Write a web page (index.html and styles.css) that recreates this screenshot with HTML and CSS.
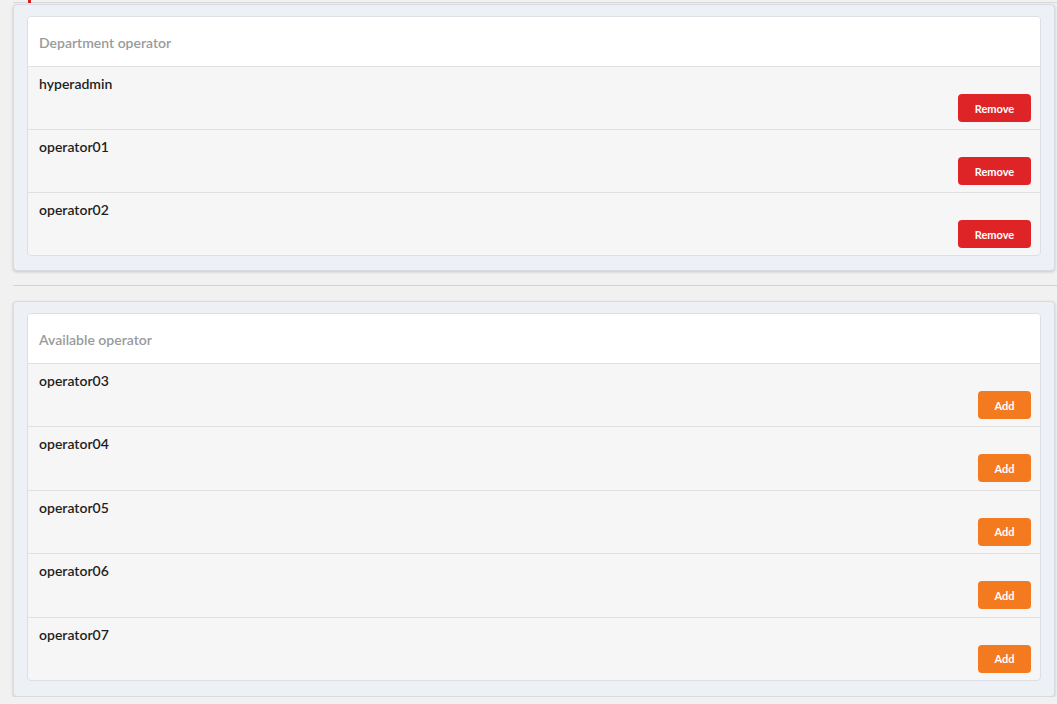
FILE: index.html
```html
<!DOCTYPE html>
<html lang="en">
<head>
    <meta charset="UTF-8">
    <meta name="viewport" content="width=device-width, initial-scale=1.0">
    <title>Department operators</title>
    <link rel="stylesheet" href="styles.css">
</head>
<body>
    <div class="page">
        <div class="top-strip"><span class="top-mark"></span></div>

        <div class="panel">
            <div class="card">
                <div class="card-header">Department operator</div>
                <div class="row">
                    <div class="row-name">hyperadmin</div>
                    <div class="row-actions"><button class="btn btn-remove">Remove</button></div>
                </div>
                <div class="row">
                    <div class="row-name">operator01</div>
                    <div class="row-actions"><button class="btn btn-remove">Remove</button></div>
                </div>
                <div class="row">
                    <div class="row-name">operator02</div>
                    <div class="row-actions"><button class="btn btn-remove">Remove</button></div>
                </div>
            </div>
        </div>

        <hr class="divider">

        <div class="panel panel-available">
            <div class="card">
                <div class="card-header">Available operator</div>
                <div class="row">
                    <div class="row-name">operator03</div>
                    <div class="row-actions"><button class="btn btn-add">Add</button></div>
                </div>
                <div class="row">
                    <div class="row-name">operator04</div>
                    <div class="row-actions"><button class="btn btn-add">Add</button></div>
                </div>
                <div class="row">
                    <div class="row-name">operator05</div>
                    <div class="row-actions"><button class="btn btn-add">Add</button></div>
                </div>
                <div class="row">
                    <div class="row-name">operator06</div>
                    <div class="row-actions"><button class="btn btn-add">Add</button></div>
                </div>
                <div class="row">
                    <div class="row-name">operator07</div>
                    <div class="row-actions"><button class="btn btn-add">Add</button></div>
                </div>
            </div>
        </div>
    </div>
</body>
</html>
```

FILE: styles.css
```css
body {
    margin: 0;
    background: #f1f1f1;
    font-family: Lato, 'Open Sans', sans-serif;
    color: #222;
    overflow: hidden;
}
.page {
    padding: 0 2px 0 13px;
}
.top-strip {
    height: 2px;
    border-bottom: 1px solid #d9d9d9;
    margin-right: -2px;
    position: relative;
}
.top-mark {
    position: absolute;
    left: 15px;
    top: 0;
    width: 3px;
    height: 3px;
    background: #d42020;
}
.panel {
    margin-top: 1px;
    background: #edf1f5;
    border: 1px solid #d6dce2;
    border-radius: 4px;
    padding: 11px 13px 14px 13px;
    box-shadow: 0 1px 3px rgba(0, 0, 0, 0.18);
}
.panel-available {
    padding-bottom: 15px;
}
.card {
    border: 1px solid #dcdfe3;
    border-radius: 4px;
    background: #f6f6f6;
    overflow: hidden;
}
.card-header {
    background: #fff;
    height: 49px;
    line-height: 52px;
    padding-left: 11px;
    font-size: 14px;
    font-weight: 600;
    color: #9a9a9a;
}
.row {
    border-top: 1px solid #e1e1e1;
    padding: 7px 9px 7px 11px;
}
.panel-available .row {
    padding-bottom: 7.4px;
}
.row-name {
    font-size: 14px;
    font-weight: 600;
    line-height: 20px;
    color: #1e1e1e;
}
.row-actions {
    display: flex;
    justify-content: flex-end;
}
.btn {
    height: 28px;
    border: none;
    border-radius: 4px;
    color: #fff;
    font-family: Lato, sans-serif;
    font-size: 11px;
    font-weight: bold;
    padding: 0;
    cursor: pointer;
}
.btn-remove {
    width: 73px;
    background: #df2427;
}
.btn-add {
    width: 53px;
    background: #f47a20;
}
.divider {
    border: none;
    border-top: 1px solid #d4d4d4;
    margin: 14px -2px 15px 0;
}
```
